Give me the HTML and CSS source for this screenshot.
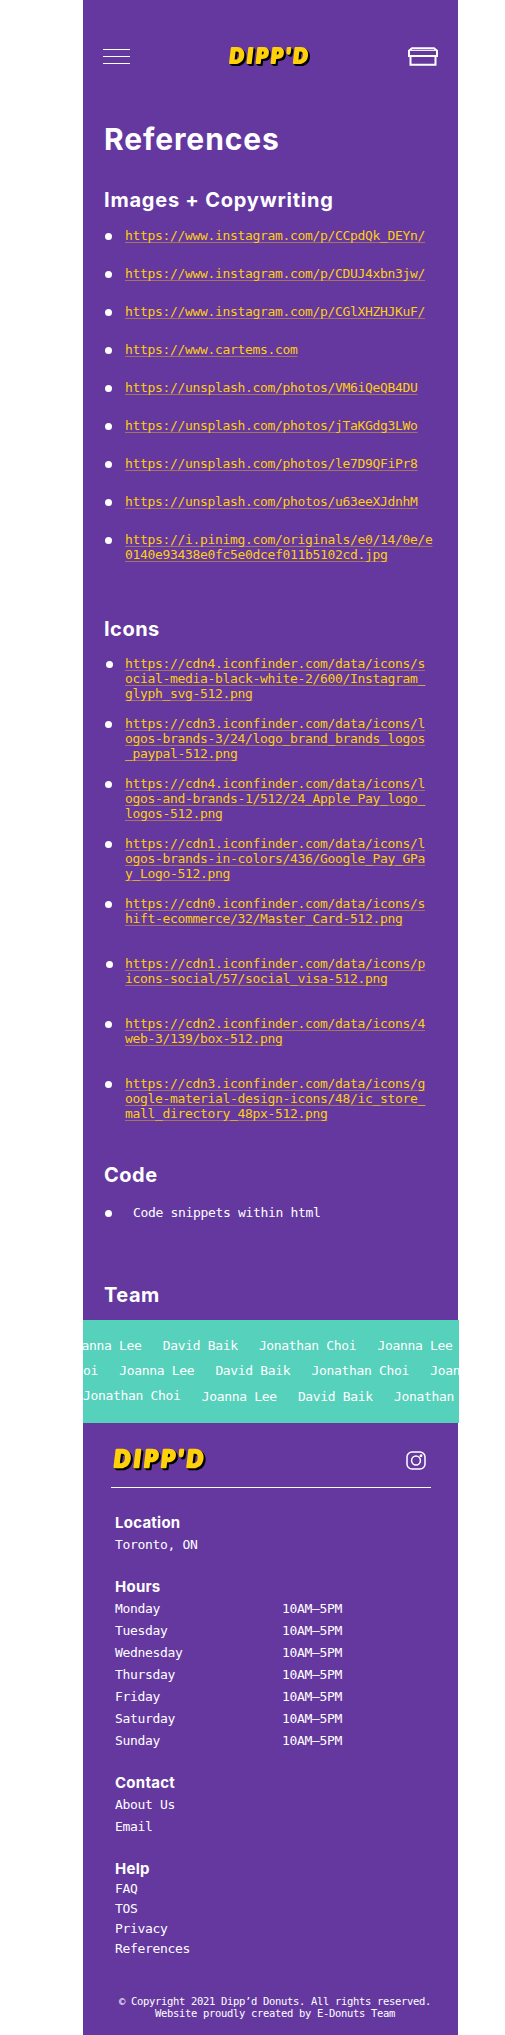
FILE: index.html
```html
<!DOCTYPE html>
<html lang="en">
<head>
<meta charset="utf-8">
<title>Dipp’d – References</title>
<link rel="stylesheet" href="styles.css">
</head>
<body>
<div class="page">
  <header class="header">
    <svg class="menu" viewBox="0 0 27 16" width="27" height="16"><path d="M0 1.500h27M0 8.500h27M0 15.500h27"/></svg>
    <svg class="logo" viewBox="0 0 82 22" width="82" height="22"><text x="1.500" y="17.500" textLength="78">DIPP'D</text></svg>
    <svg class="box" viewBox="0 0 30 19" width="30" height="19"><path d="M4 1.200h22l3 2.500v5.300H1V3.700z"/><path d="M2.500 3.400h25" class="thin"/><path d="M2.500 9v8.800h25V9"/></svg>
  </header>
  <main class="main">
    <h1>References</h1>
    <h2 class="h-images">Images + Copywriting</h2>
    <ul class="list images">
      <li><a>https://www.instagram.com/p/CCpdQk_DEYn/</a></li>
      <li><a>https://www.instagram.com/p/CDUJ4xbn3jw/</a></li>
      <li><a>https://www.instagram.com/p/CGlXHZHJKuF/</a></li>
      <li><a>https://www.cartems.com</a></li>
      <li><a>https://unsplash.com/photos/VM6iQeQB4DU</a></li>
      <li><a>https://unsplash.com/photos/jTaKGdg3LWo</a></li>
      <li><a>https://unsplash.com/photos/le7D9QFiPr8</a></li>
      <li><a>https://unsplash.com/photos/u63eeXJdnhM</a></li>
      <li><a>https://i.pinimg.com/originals/e0/14/0e/e<br>0140e93438e0fc5e0dcef011b5102cd.jpg</a></li>
    </ul>
    <h2 class="h-icons">Icons</h2>
    <ul class="list icons">
      <li class="shift"><a>https://cdn4.iconfinder.com/data/icons/s<br>ocial-media-black-white-2/600/Instagram_<br>glyph_svg-512.png</a></li>
      <li><a>https://cdn3.iconfinder.com/data/icons/l<br>ogos-brands-3/24/logo_brand_brands_logos<br>_paypal-512.png</a></li>
      <li><a>https://cdn4.iconfinder.com/data/icons/l<br>ogos-and-brands-1/512/24_Apple_Pay_logo_<br>logos-512.png</a></li>
      <li><a>https://cdn1.iconfinder.com/data/icons/l<br>ogos-brands-in-colors/436/Google_Pay_GPa<br>y_Logo-512.png</a></li>
      <li><a>https://cdn0.iconfinder.com/data/icons/s<br>hift-ecommerce/32/Master_Card-512.png</a></li>
      <li class="shift"><a>https://cdn1.iconfinder.com/data/icons/p<br>icons-social/57/social_visa-512.png</a></li>
      <li><a>https://cdn2.iconfinder.com/data/icons/4<br>web-3/139/box-512.png</a></li>
      <li><a>https://cdn3.iconfinder.com/data/icons/g<br>oogle-material-design-icons/48/ic_store_<br>mall_directory_48px-512.png</a></li>
    </ul>
    <h2 class="h-code">Code</h2>
    <ul class="list code">
      <li><span>Code snippets within html</span></li>
    </ul>
    <h2 class="h-team">Team</h2>
  </main>
  <section class="team">
    <div class="names row1"><span>Joanna Lee</span><span>David Baik</span><span>Jonathan Choi</span><span>Joanna Lee</span></div>
    <div class="names row2"><span>Jonathan Choi</span><span>Joanna Lee</span><span>David Baik</span><span>Jonathan Choi</span><span>Joanna Lee</span></div>
    <div class="names row3"><span>Jonathan Choi</span><span>Joanna Lee</span><span>David Baik</span><span>Jonathan</span></div>
  </section>
  <footer class="footer">
    <div class="brand">
      <svg class="logo" viewBox="0 0 82 22" width="94" height="25"><text x="1.500" y="17.500" textLength="78">DIPP'D</text></svg>
      <svg class="insta" viewBox="0 0 20 19" width="20" height="19"><rect x="1" y="1" width="18" height="17" rx="5"/><circle cx="10" cy="9.500" r="4.400"/><circle cx="15" cy="4.700" r=".7"/></svg>
    </div>
    <div class="info">
      <h3 class="h-location">Location</h3>
      <p>Toronto, ON</p>
      <h3>Hours</h3>
      <dl class="hours">
        <dt>Monday</dt><dd>10AM–5PM</dd>
        <dt>Tuesday</dt><dd>10AM–5PM</dd>
        <dt>Wednesday</dt><dd>10AM–5PM</dd>
        <dt>Thursday</dt><dd>10AM–5PM</dd>
        <dt>Friday</dt><dd>10AM–5PM</dd>
        <dt>Saturday</dt><dd>10AM–5PM</dd>
        <dt>Sunday</dt><dd>10AM–5PM</dd>
      </dl>
      <h3>Contact</h3>
      <p>About Us</p>
      <p>Email</p>
      <h3>Help</h3>
      <div class="help"><p>FAQ</p><p>TOS</p><p>Privacy</p><p>References</p></div>
    </div>
    <div class="copyright">© Copyright 2021 Dipp’d Donuts. All rights reserved.<br>Website proudly created by E-Donuts Team</div>
  </footer>
</div>
</body>
</html>
```
FILE: styles.css
```css
* { box-sizing: border-box; margin: 0; padding: 0; }
body { background: #fff; }
.page {
  width: 375px;
  height: 2035px;
  margin-left: 83px;
  background: #64389f;
  color: #fff;
  font: 13px/15px "DejaVu Sans Mono", monospace;
  letter-spacing: -0.327px;
}
.header {
  display: flex;
  align-items: center;
  justify-content: space-between;
  height: 121px;
  padding: 0 20px 8px;
}
.menu, .box { fill: none; stroke: #fff; }
.menu { stroke-width: 1; margin-bottom: 2px; }
.box { stroke-width: 2; }
.box .thin { stroke-width: 1; }
.logo {
  overflow: visible;
  margin-bottom: 2px;
  font: italic 900 20px Lato, sans-serif;
  letter-spacing: 0;
  fill: #ffd10a;
  stroke: #ffd10a;
  stroke-width: 2.200px;
  stroke-linejoin: round;
  filter: drop-shadow(1px 1px 0 #000) drop-shadow(1px 1px 0 #000);
}
h1, h2, h3 { font-family: Inter, sans-serif; font-weight: 700; }
.main { padding: 0 21px; }
h1 { font-size: 30px; line-height: 36px; letter-spacing: 0.900px; }
h2 { font-size: 20px; line-height: 24px; letter-spacing: 0.500px; }
.h-images { margin: 31px 0 16px; letter-spacing: 0.770px; }
.h-icons { margin: 47px 0 15px; }
.h-code { margin: 27px 0 18px; }
.h-team { margin: 63px 0 13px; }
.list { list-style: none; white-space: nowrap; }
.list li { display: flex; gap: 13px; padding-left: 1px; }
.list li::before {
  content: "";
  flex: none;
  width: 7px;
  height: 7px;
  margin-top: 5px;
  border-radius: 50%;
  background: #fff;
}
.list .shift { padding-left: 2px; gap: 12px; }
.images li { height: 38px; }
.icons li { height: 60px; }
.list.code li { gap: 21px; }
.list a {
  color: #ffcd12;
  text-decoration: underline;
  text-decoration-color: rgba(255, 205, 18, 0.4);
  text-decoration-thickness: 1px;
  text-decoration-skip-ink: none;
  text-underline-offset: 2px;
}
.team {
  width: 376px;
  height: 103px;
  padding-top: 13px;
  overflow: hidden;
  background: #56d1bb;
  line-height: 25px;
}
.names { display: flex; gap: 21.200px; white-space: nowrap; }
.row1 { margin-left: -16.500px; }
.row2 { margin-left: -82.500px; }
.row3 { margin-left: 0; }
.row3 span + span { margin-top: 1px; margin-bottom: -1px; }
.brand {
  display: flex;
  align-items: center;
  justify-content: space-between;
  width: 320px;
  height: 65px;
  margin-left: 28px;
  padding: 10px 5px 0 1px;
  border-bottom: 1px solid #fff;
}
.insta { fill: none; stroke: #fff; stroke-width: 1.500; }
.info { padding: 0 32px; line-height: 22px; }
.info p, .info dl { position: relative; top: 1px; }
h3 { font-size: 15px; line-height: 20px; letter-spacing: 0.250px; margin-top: 22px; }
.h-location { margin-top: 25px; }
.hours { display: grid; grid-template-columns: 167px auto; }
.help { line-height: 20px; }
.info .help p { top: 0; }
.copyright {
  width: 320px;
  margin: 36px 0 0 32px;
  text-align: center;
  font-size: 10.500px;
  line-height: 12px;
  letter-spacing: -0.320px;
}
```
